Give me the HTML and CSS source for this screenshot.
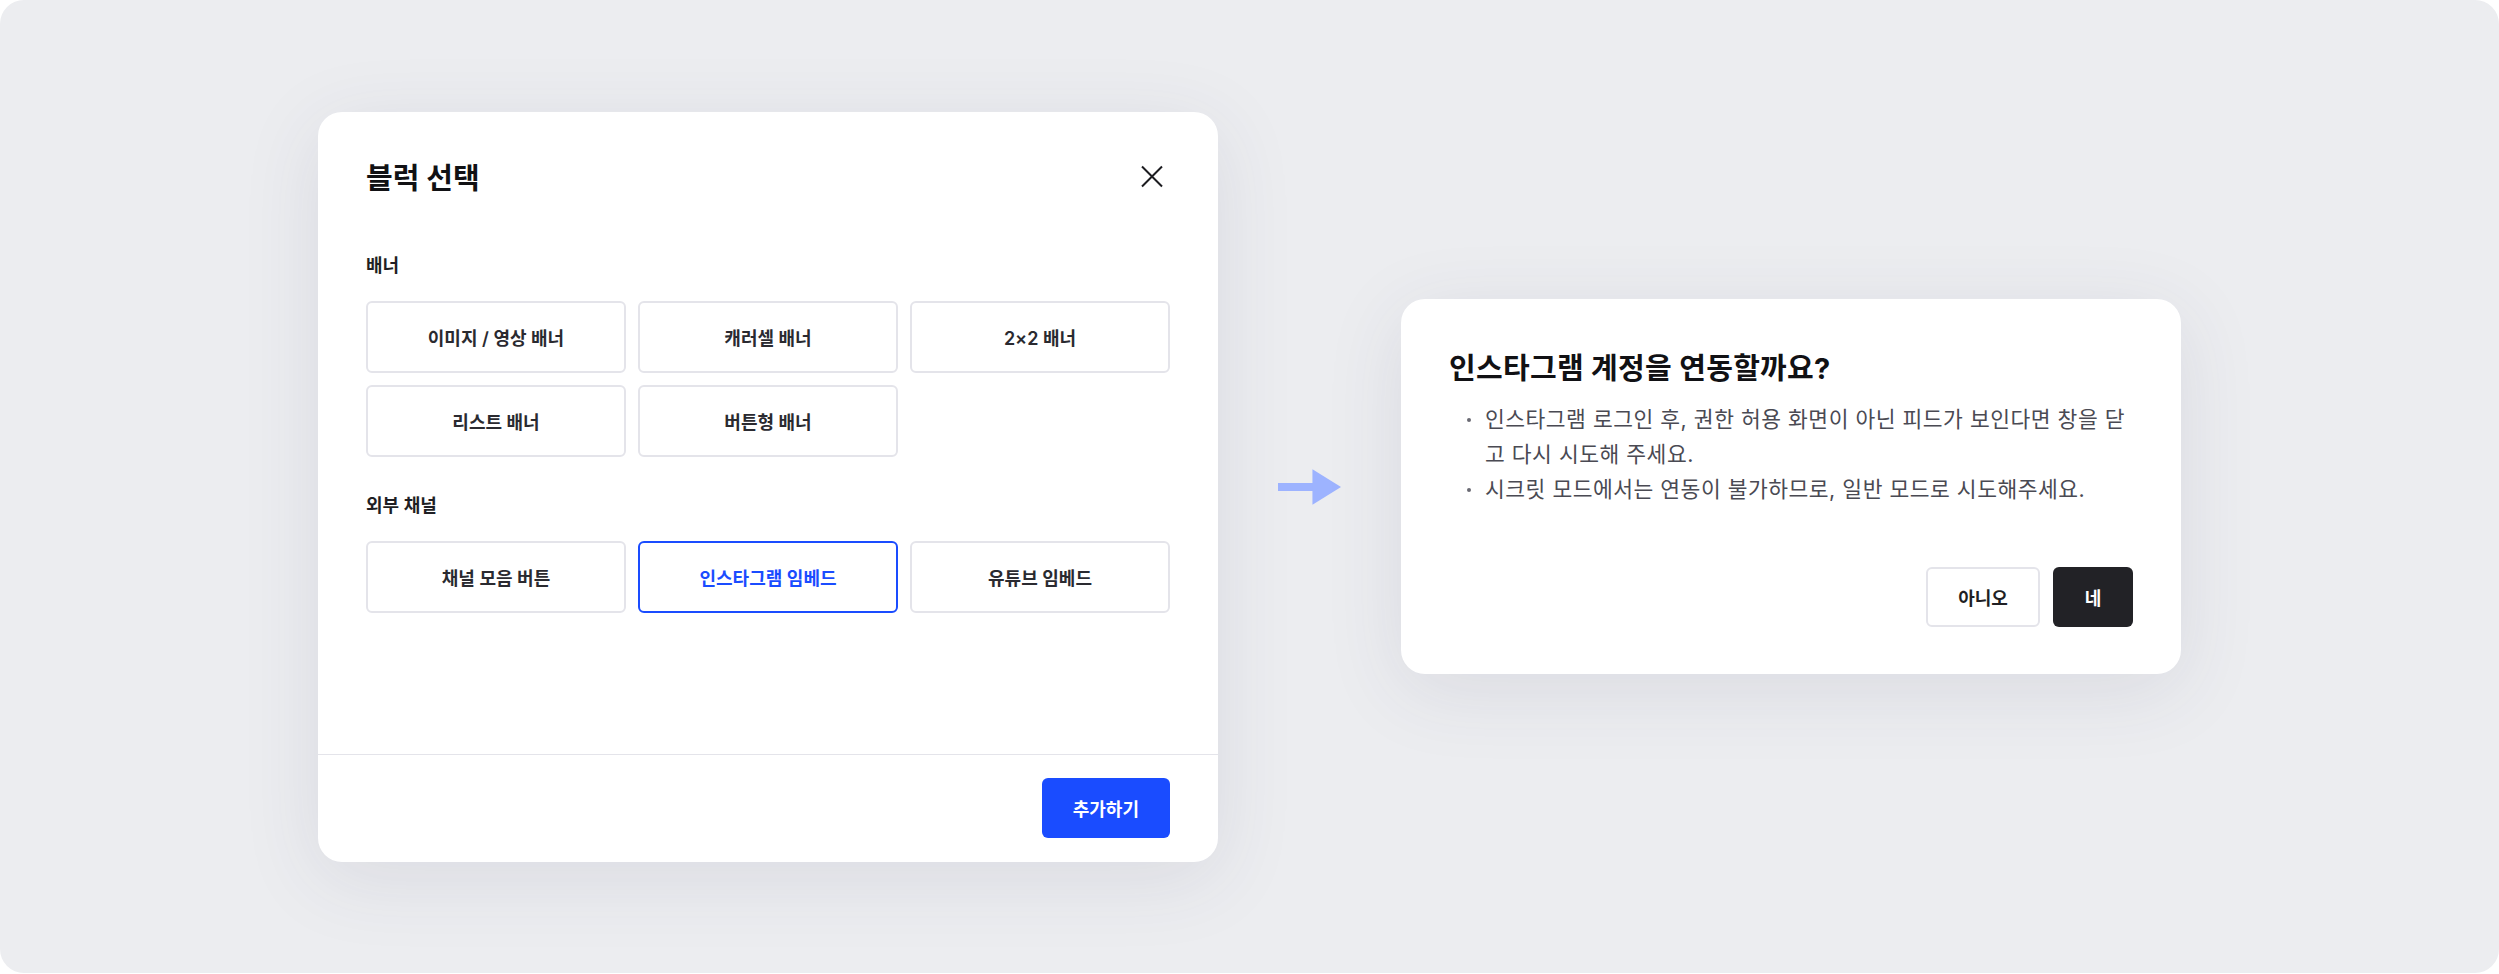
FILE: index.html
```html
<!DOCTYPE html>
<html lang="ko">
<head>
  <meta charset="UTF-8" />
  <title>블럭 선택</title>
  <link rel="stylesheet" href="styles.css">
</head>
<body>
  <div class="stage">
    <!-- 블럭 선택 모달 -->
    <section class="modal modal-select">
      <div class="modal-body">
        <header class="modal-head">
          <h2 class="modal-title">블럭 선택</h2>
          <button class="close-btn" aria-label="닫기">
            <svg width="36" height="36" viewBox="0 0 36 36">
              <path d="M8 7.5L28 27.5M28 7.5L8 27.5" stroke="#1c1c20" stroke-width="2" fill="none" />
            </svg>
          </button>
        </header>

        <div class="block-group">
          <h3 class="group-label">배너</h3>
          <div class="block-grid">
            <button class="block-option">이미지 / 영상 배너</button>
            <button class="block-option">캐러셀 배너</button>
            <button class="block-option">2×2 배너</button>
            <button class="block-option">리스트 배너</button>
            <button class="block-option">버튼형 배너</button>
          </div>
        </div>

        <div class="block-group">
          <h3 class="group-label">외부 채널</h3>
          <div class="block-grid">
            <button class="block-option">채널 모음 버튼</button>
            <button class="block-option selected">인스타그램 임베드</button>
            <button class="block-option">유튜브 임베드</button>
          </div>
        </div>
      </div>

      <footer class="modal-foot">
        <button class="btn btn-primary">추가하기</button>
      </footer>
    </section>

    <svg class="flow-arrow" width="64" height="36" viewBox="0 0 64 36">
      <path d="M0 14H38V22H0Z" fill="#9db3ff" />
      <path d="M35 0L64 18L35 36Z" fill="#9db3ff" />
    </svg>

    <!-- 인스타그램 연동 확인 -->
    <section class="modal modal-confirm">
      <h2 class="modal-title confirm-title">인스타그램 계정을 연동할까요?</h2>
      <ul class="notice-list">
        <li>인스타그램 로그인 후, 권한 허용 화면이 아닌 피드가 보인다면 창을 닫고 다시 시도해 주세요.</li>
        <li>시크릿 모드에서는 연동이 불가하므로, 일반 모드로 시도해주세요.</li>
      </ul>
      <div class="confirm-actions">
        <button class="btn btn-outline">아니오</button>
        <button class="btn btn-dark">네</button>
      </div>
    </section>
  </div>
</body>
</html>
```

FILE: styles.css
```css
body {
  margin: 0;
  background: #fff;
  font-family: "Inter", "Noto Sans CJK KR", sans-serif;
  color: #1c1c20;
}

.stage {
  width: 2499px;
  height: 973px;
  background-color: #ecedf0;
  border-radius: 24px;
  display: flex;
  align-items: center;
  justify-content: center;
  gap: 60px;
}

.modal {
  background-color: #fff;
  border-radius: 24px;
  box-shadow: 0 16px 80px rgba(60, 60, 100, 0.1);
  box-sizing: border-box;
}

button {
  font-family: inherit;
  cursor: pointer;
}

/* 블럭 선택 */
.modal-select {
  width: 900px;
  height: 750px;
  display: flex;
  flex-direction: column;
}

.modal-body {
  flex: 1;
  padding: 47px 48px 0;
}

.modal-head {
  display: flex;
  align-items: center;
  justify-content: space-between;
  height: 40px;
}

.modal-title {
  margin: 0;
  font-size: 29px;
  line-height: 40px;
  font-weight: 700;
  color: #111114;
}

.close-btn {
  width: 36px;
  height: 36px;
  padding: 0;
  border: none;
  background: none;
  margin-top: -4px;
}

.close-btn svg {
  display: block;
}

.block-group {
  margin-top: 36px;
}

.block-group:first-of-type {
  margin-top: 54px;
}

.group-label {
  margin: 0 0 22px;
  font-size: 18px;
  line-height: 26px;
  font-weight: 600;
  color: #1f1f24;
}

.block-grid {
  display: grid;
  grid-template-columns: repeat(3, 1fr);
  gap: 12px;
}

.block-option {
  height: 72px;
  border: 2px solid #e4e4ea;
  border-radius: 6px;
  background-color: #fff;
  font-size: 18px;
  font-weight: 600;
  color: #2a2a30;
}

.block-option.selected {
  border-color: #1a4cff;
  color: #1a4cff;
}

.modal-foot {
  border-top: 1px solid #e4e4ea;
  padding: 23px 48px 24px;
  display: flex;
  justify-content: flex-end;
}

.btn {
  height: 60px;
  padding: 0 31px;
  border-radius: 6px;
  font-size: 18px;
  font-weight: 600;
  border: none;
}

.btn-primary {
  background-color: #1a4cff;
  color: #fff;
}

.btn-outline {
  background-color: #fff;
  border: 2px solid #e4e4ea;
  color: #1f1f24;
  width: 114px;
  padding: 0;
}

.btn-dark {
  background-color: #222226;
  color: #fff;
  width: 80px;
  padding: 0;
}

.flow-arrow {
  flex-shrink: 0;
  width: 63px;
}

/* 연동 확인 */
.modal-confirm {
  width: 780px;
  height: 375px;
  padding: 50px 48px 47px;
  display: flex;
  flex-direction: column;
}

.confirm-title {
  letter-spacing: 0.3px;
}

.notice-list {
  list-style: none;
  margin: 13px 0 0;
  padding: 0;
}

.notice-list li {
  position: relative;
  padding-left: 36px;
  font-size: 21.5px;
  line-height: 35px;
  letter-spacing: 0.5px;
  color: #4a4a53;
}

.notice-list li::before {
  content: "";
  position: absolute;
  left: 18px;
  top: 16px;
  width: 4px;
  height: 4px;
  border-radius: 50%;
  background-color: #6a6a73;
}

.confirm-actions {
  margin-top: auto;
  display: flex;
  justify-content: flex-end;
  gap: 13px;
}
```
